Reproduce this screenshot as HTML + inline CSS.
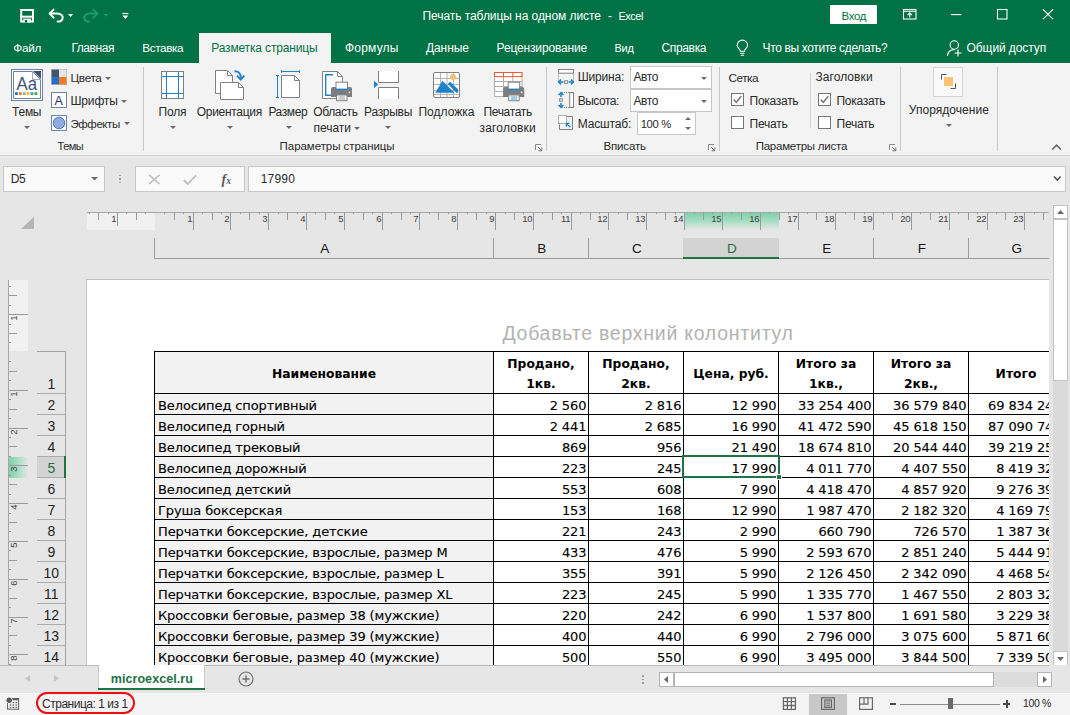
<!DOCTYPE html><html lang="ru"><head><meta charset="utf-8"><title>Печать таблицы на одном листе - Excel</title><style>
*{box-sizing:border-box;margin:0;padding:0}
html,body{width:1070px;height:715px;overflow:hidden;background:#e6e6e6}
body{font-family:"Liberation Sans",sans-serif;font-size:12px;color:#2a2a2a;position:relative}
.a{position:absolute}
.t{position:absolute;white-space:pre;line-height:20px;height:20px}
.d{font-family:"DejaVu Sans","Liberation Sans",sans-serif;-webkit-text-stroke:0.12px currentColor}
.sep{position:absolute;width:1px;background:#c8c8c8}
svg{position:absolute;overflow:visible}
</style></head><body>
<div class="a" style="left:0px;top:0px;width:1070px;height:63px;background:#007245;"></div>
<div class="t" style="left:422.5px;top:5.8px;font-size:12px;letter-spacing:-0.062px;color:#fff;">Печать таблицы на одном листе</div>
<div class="t" style="left:608.0px;top:5.8px;font-size:12px;color:#fff;">-</div>
<div class="t" style="left:618.4px;top:6.2px;font-size:11.0px;letter-spacing:-0.452px;color:#fff;">Excel</div>
<div class="a" style="left:830px;top:5px;width:47px;height:19px;background:#fff;border-radius:1px"></div>
<div class="t" style="left:841.6px;top:6.0px;font-size:11.5px;letter-spacing:-0.405px;color:#007245;">Вход</div>
<div class="t" style="left:13.3px;top:37.9px;font-size:11.75px;letter-spacing:-0.297px;color:#fff;">Файл</div>
<div class="t" style="left:71.4px;top:37.8px;font-size:12px;letter-spacing:-0.431px;color:#fff;">Главная</div>
<div class="t" style="left:142.3px;top:37.9px;font-size:11.75px;letter-spacing:-0.398px;color:#fff;">Вставка</div>
<div class="t" style="left:345.0px;top:37.8px;font-size:12px;letter-spacing:0.197px;color:#fff;">Формулы</div>
<div class="t" style="left:425.9px;top:37.8px;font-size:12px;letter-spacing:-0.052px;color:#fff;">Данные</div>
<div class="t" style="left:496.6px;top:37.8px;font-size:12px;letter-spacing:-0.159px;color:#fff;">Рецензирование</div>
<div class="t" style="left:614.5px;top:38.2px;font-size:11.0px;letter-spacing:-0.303px;color:#fff;">Вид</div>
<div class="t" style="left:661.4px;top:37.8px;font-size:12px;letter-spacing:-0.330px;color:#fff;">Справка</div>
<div class="t" style="left:762.6px;top:37.8px;font-size:12px;letter-spacing:-0.360px;color:#fff;">Что вы хотите сделать?</div>
<div class="t" style="left:966.6px;top:37.8px;font-size:12px;letter-spacing:-0.093px;color:#fff;">Общий доступ</div>
<div class="a" style="left:199px;top:33px;width:132px;height:30px;background:#f3f3f3;"></div>
<div class="t" style="left:211.2px;top:37.8px;font-size:12px;letter-spacing:-0.148px;color:#007245;">Разметка страницы</div>
<div class="a" style="left:0px;top:63px;width:1070px;height:92px;background:#f3f3f3;"></div>
<div class="a" style="left:0px;top:155px;width:1070px;height:1px;background:#d2d2d2;"></div>
<div class="a" style="left:0px;top:156px;width:1070px;height:2px;background:#ececec;"></div>
<div class="sep" style="left:143px;top:67px;height:84px"></div>
<div class="sep" style="left:546px;top:67px;height:84px"></div>
<div class="sep" style="left:719px;top:67px;height:84px"></div>
<div class="sep" style="left:900px;top:67px;height:84px"></div>
<div class="sep" style="left:997px;top:67px;height:84px"></div>
<div class="sep" style="left:810px;top:73px;height:55px;background:#d4d4d4"></div>
<div class="t" style="left:57.6px;top:136.4px;font-size:11px;letter-spacing:-0.568px;">Темы</div>
<div class="t" style="left:279.6px;top:136.2px;font-size:11.5px;letter-spacing:-0.055px;">Параметры страницы</div>
<div class="t" style="left:603.5px;top:136.2px;font-size:11.5px;letter-spacing:-0.164px;">Вписать</div>
<div class="t" style="left:755.7px;top:136.2px;font-size:11.5px;letter-spacing:-0.237px;">Параметры листа</div>
<div class="t" style="left:12.1px;top:102.0px;font-size:12px;letter-spacing:-0.273px;">Темы</div>
<svg style="left:23.8px;top:125.5px" width="6" height="3" viewBox="0 0 6 3"><path d="M0 0H6L3.0 3Z" fill="#6a6a6a"/></svg>
<div class="t" style="left:70.5px;top:67.9px;font-size:11.75px;letter-spacing:-0.334px;">Цвета</div>
<svg style="left:104.5px;top:76.5px" width="6" height="3" viewBox="0 0 6 3"><path d="M0 0H6L3.0 3Z" fill="#6a6a6a"/></svg>
<div class="t" style="left:70.5px;top:90.8px;font-size:12px;letter-spacing:-0.162px;">Шрифты</div>
<svg style="left:120.7px;top:99.5px" width="6" height="3" viewBox="0 0 6 3"><path d="M0 0H6L3.0 3Z" fill="#6a6a6a"/></svg>
<div class="t" style="left:70.5px;top:114.0px;font-size:11.5px;letter-spacing:-0.430px;">Эффекты</div>
<svg style="left:123.5px;top:122.3px" width="6" height="3" viewBox="0 0 6 3"><path d="M0 0H6L3.0 3Z" fill="#6a6a6a"/></svg>
<div class="t" style="left:158.5px;top:102.0px;font-size:12px;letter-spacing:-0.182px;">Поля</div>
<svg style="left:169.5px;top:126px" width="6" height="3" viewBox="0 0 6 3"><path d="M0 0H6L3.0 3Z" fill="#6a6a6a"/></svg>
<div class="t" style="left:196.8px;top:102.0px;font-size:12px;letter-spacing:-0.303px;">Ориентация</div>
<svg style="left:226.5px;top:126px" width="6" height="3" viewBox="0 0 6 3"><path d="M0 0H6L3.0 3Z" fill="#6a6a6a"/></svg>
<div class="t" style="left:268.4px;top:102.0px;font-size:12px;letter-spacing:-0.390px;">Размер</div>
<svg style="left:285.8px;top:126px" width="6" height="3" viewBox="0 0 6 3"><path d="M0 0H6L3.0 3Z" fill="#6a6a6a"/></svg>
<div class="t" style="left:313.3px;top:102.0px;font-size:12px;letter-spacing:-0.416px;">Область</div>
<div class="t" style="left:313.6px;top:117.8px;font-size:12px;letter-spacing:-0.048px;">печати</div>
<svg style="left:353.6px;top:126.5px" width="6" height="3" viewBox="0 0 6 3"><path d="M0 0H6L3.0 3Z" fill="#6a6a6a"/></svg>
<div class="t" style="left:364.1px;top:102.0px;font-size:12px;letter-spacing:-0.292px;">Разрывы</div>
<svg style="left:385.4px;top:126px" width="6" height="3" viewBox="0 0 6 3"><path d="M0 0H6L3.0 3Z" fill="#6a6a6a"/></svg>
<div class="t" style="left:418.5px;top:102.0px;font-size:12px;letter-spacing:-0.005px;">Подложка</div>
<div class="t" style="left:483.4px;top:102.0px;font-size:12px;letter-spacing:-0.313px;">Печатать</div>
<div class="t" style="left:479.6px;top:117.8px;font-size:12px;letter-spacing:0.157px;">заголовки</div>
<div class="t" style="left:577.7px;top:67.4px;font-size:12px;letter-spacing:-0.170px;">Ширина:</div>
<div class="t" style="left:577.7px;top:90.8px;font-size:12px;letter-spacing:-0.474px;">Высота:</div>
<div class="t" style="left:577.7px;top:113.8px;font-size:12px;letter-spacing:-0.141px;">Масштаб:</div>
<div class="a" style="left:630px;top:66px;width:82px;height:23px;background:#fff;border:1px solid #c6c6c6"></div>
<div class="a" style="left:630px;top:89px;width:82px;height:23px;background:#fff;border:1px solid #c6c6c6"></div>
<div class="a" style="left:637px;top:112px;width:59px;height:23px;background:#fff;border:1px solid #c6c6c6"></div>
<div class="t" style="left:633.4px;top:67.4px;font-size:12px;letter-spacing:-0.352px;">Авто</div>
<div class="t" style="left:633.4px;top:90.8px;font-size:12px;letter-spacing:-0.352px;">Авто</div>
<div class="t" style="left:640.7px;top:114.1px;font-size:11.25px;letter-spacing:-0.352px;">100 %</div>
<svg style="left:701.2px;top:76.6px" width="6" height="3" viewBox="0 0 6 3"><path d="M0 0H6L3.0 3Z" fill="#6a6a6a"/></svg>
<svg style="left:701.2px;top:99.6px" width="6" height="3" viewBox="0 0 6 3"><path d="M0 0H6L3.0 3Z" fill="#6a6a6a"/></svg>
<svg style="left:684.6px;top:127px" width="6" height="3" viewBox="0 0 6 3"><path d="M0 0H6L3.0 3Z" fill="#6a6a6a"/></svg>
<svg style="left:684.6px;top:117.3px" width="6" height="3" viewBox="0 0 6 3"><path d="M0 3H6L3 0Z" fill="#6a6a6a"/></svg>
<div class="t" style="left:728.5px;top:67.5px;font-size:11.75px;letter-spacing:-0.463px;">Сетка</div>
<div class="t" style="left:815.4px;top:67.4px;font-size:12px;letter-spacing:0.076px;">Заголовки</div>
<div class="a" style="left:731px;top:93px;width:13px;height:13px;background:#fff;border:1px solid #767676"></div>
<svg style="left:731px;top:93px" width="13" height="13" viewBox="0 0 13 13"><path d="M2.7 6.6L5.3 9.3L10.3 3.2" fill="none" stroke="#7a7a7a" stroke-width="1.5"/></svg>
<div class="a" style="left:731px;top:116px;width:13px;height:13px;background:#fff;border:1px solid #767676"></div>
<div class="t" style="left:749.6px;top:90.8px;font-size:12px;letter-spacing:-0.288px;">Показать</div>
<div class="t" style="left:749.6px;top:113.8px;font-size:12px;letter-spacing:-0.242px;">Печать</div>
<div class="a" style="left:818px;top:93px;width:13px;height:13px;background:#fff;border:1px solid #767676"></div>
<svg style="left:818px;top:93px" width="13" height="13" viewBox="0 0 13 13"><path d="M2.7 6.6L5.3 9.3L10.3 3.2" fill="none" stroke="#7a7a7a" stroke-width="1.5"/></svg>
<div class="a" style="left:818px;top:116px;width:13px;height:13px;background:#fff;border:1px solid #767676"></div>
<div class="t" style="left:836.5px;top:90.8px;font-size:12px;letter-spacing:-0.288px;">Показать</div>
<div class="t" style="left:836.5px;top:113.8px;font-size:12px;letter-spacing:-0.242px;">Печать</div>
<div class="a" style="left:933px;top:67px;width:30px;height:30px;background:#f9f9f9;border:1px solid #d4d4d4"></div>
<div class="t" style="left:908.8px;top:99.6px;font-size:12px;letter-spacing:0.042px;">Упорядочение</div>
<svg style="left:946.3px;top:124.2px" width="6" height="3" viewBox="0 0 6 3"><path d="M0 0H6L3.0 3Z" fill="#6a6a6a"/></svg>
<div class="a" style="left:3px;top:166px;width:102px;height:26px;background:#fafafa;border:1px solid #c8c8c8"></div>
<div class="t" style="left:10.7px;top:169.3px;font-size:12px;letter-spacing:-0.244px;">D5</div>
<svg style="left:91.1px;top:177px" width="7" height="3.5" viewBox="0 0 7 3.5"><path d="M0 0H7L3.5 3.5Z" fill="#6a6a6a"/></svg>
<div class="a" style="left:119.3px;top:174.5px;width:1.7px;height:1.7px;background:#a0a0a0;"></div>
<div class="a" style="left:119.3px;top:178px;width:1.7px;height:1.7px;background:#a0a0a0;"></div>
<div class="a" style="left:119.3px;top:181.5px;width:1.7px;height:1.7px;background:#a0a0a0;"></div>
<div class="a" style="left:135px;top:166px;width:110px;height:26px;background:#fafafa;border:1px solid #c8c8c8"></div>
<div class="a" style="left:248px;top:166px;width:818px;height:26px;background:#fafafa;border:1px solid #c8c8c8"></div>
<div class="t" style="left:260.7px;top:169.3px;font-size:12px;letter-spacing:0.206px;">17990</div>
<div class="a" style="left:86px;top:279px;width:963px;height:387px;background:#fff;border-left:1px solid #c2c2c2;border-top:1px solid #c2c2c2"></div>
<div class="a" style="left:87px;top:212px;width:68px;height:18px;background:#f1f1f1;"></div>
<div class="a" style="left:684px;top:213px;width:95px;height:17px;background:linear-gradient(#7fd1ac,#a9dec6 50%,rgba(230,230,230,0))"></div>
<div class="a" style="left:87px;top:212px;width:962px;height:1px;background:#a6a6a6;"></div>
<div class="a" style="left:89px;top:212px;width:1px;height:2px;background:#9a9a9a;"></div>
<div class="a" style="left:98px;top:212px;width:1px;height:8px;background:#9a9a9a;"></div>
<div class="a" style="left:108px;top:212px;width:1px;height:2px;background:#9a9a9a;"></div>
<div class="a" style="left:117px;top:212px;width:1px;height:14px;background:#9a9a9a;"></div>
<div class="t" style="left:111.2px;top:209.0px;font-size:9.5px;color:#444;">1</div>
<div class="a" style="left:126px;top:212px;width:1px;height:2px;background:#9a9a9a;"></div>
<div class="a" style="left:136px;top:212px;width:1px;height:8px;background:#9a9a9a;"></div>
<div class="a" style="left:145px;top:212px;width:1px;height:2px;background:#9a9a9a;"></div>
<div class="a" style="left:164px;top:212px;width:1px;height:2px;background:#9a9a9a;"></div>
<div class="a" style="left:174px;top:212px;width:1px;height:8px;background:#9a9a9a;"></div>
<div class="a" style="left:183px;top:212px;width:1px;height:2px;background:#9a9a9a;"></div>
<div class="a" style="left:193px;top:212px;width:1px;height:18px;background:#9a9a9a;"></div>
<div class="t" style="left:187.2px;top:209.0px;font-size:9.5px;color:#444;">1</div>
<div class="a" style="left:202px;top:212px;width:1px;height:2px;background:#9a9a9a;"></div>
<div class="a" style="left:212px;top:212px;width:1px;height:8px;background:#9a9a9a;"></div>
<div class="a" style="left:221px;top:212px;width:1px;height:2px;background:#9a9a9a;"></div>
<div class="a" style="left:230px;top:212px;width:1px;height:18px;background:#9a9a9a;"></div>
<div class="t" style="left:224.2px;top:209.0px;font-size:9.5px;color:#444;">2</div>
<div class="a" style="left:240px;top:212px;width:1px;height:2px;background:#9a9a9a;"></div>
<div class="a" style="left:249px;top:212px;width:1px;height:8px;background:#9a9a9a;"></div>
<div class="a" style="left:259px;top:212px;width:1px;height:2px;background:#9a9a9a;"></div>
<div class="a" style="left:268px;top:212px;width:1px;height:18px;background:#9a9a9a;"></div>
<div class="t" style="left:262.2px;top:209.0px;font-size:9.5px;color:#444;">3</div>
<div class="a" style="left:278px;top:212px;width:1px;height:2px;background:#9a9a9a;"></div>
<div class="a" style="left:287px;top:212px;width:1px;height:8px;background:#9a9a9a;"></div>
<div class="a" style="left:297px;top:212px;width:1px;height:2px;background:#9a9a9a;"></div>
<div class="a" style="left:306px;top:212px;width:1px;height:18px;background:#9a9a9a;"></div>
<div class="t" style="left:300.2px;top:209.0px;font-size:9.5px;color:#444;">4</div>
<div class="a" style="left:315px;top:212px;width:1px;height:2px;background:#9a9a9a;"></div>
<div class="a" style="left:325px;top:212px;width:1px;height:8px;background:#9a9a9a;"></div>
<div class="a" style="left:334px;top:212px;width:1px;height:2px;background:#9a9a9a;"></div>
<div class="a" style="left:344px;top:212px;width:1px;height:18px;background:#9a9a9a;"></div>
<div class="t" style="left:338.2px;top:209.0px;font-size:9.5px;color:#444;">5</div>
<div class="a" style="left:353px;top:212px;width:1px;height:2px;background:#9a9a9a;"></div>
<div class="a" style="left:363px;top:212px;width:1px;height:8px;background:#9a9a9a;"></div>
<div class="a" style="left:372px;top:212px;width:1px;height:2px;background:#9a9a9a;"></div>
<div class="a" style="left:382px;top:212px;width:1px;height:18px;background:#9a9a9a;"></div>
<div class="t" style="left:376.2px;top:209.0px;font-size:9.5px;color:#444;">6</div>
<div class="a" style="left:391px;top:212px;width:1px;height:2px;background:#9a9a9a;"></div>
<div class="a" style="left:401px;top:212px;width:1px;height:8px;background:#9a9a9a;"></div>
<div class="a" style="left:410px;top:212px;width:1px;height:2px;background:#9a9a9a;"></div>
<div class="a" style="left:419px;top:212px;width:1px;height:18px;background:#9a9a9a;"></div>
<div class="t" style="left:413.2px;top:209.0px;font-size:9.5px;color:#444;">7</div>
<div class="a" style="left:429px;top:212px;width:1px;height:2px;background:#9a9a9a;"></div>
<div class="a" style="left:438px;top:212px;width:1px;height:8px;background:#9a9a9a;"></div>
<div class="a" style="left:448px;top:212px;width:1px;height:2px;background:#9a9a9a;"></div>
<div class="a" style="left:457px;top:212px;width:1px;height:18px;background:#9a9a9a;"></div>
<div class="t" style="left:451.2px;top:209.0px;font-size:9.5px;color:#444;">8</div>
<div class="a" style="left:467px;top:212px;width:1px;height:2px;background:#9a9a9a;"></div>
<div class="a" style="left:476px;top:212px;width:1px;height:8px;background:#9a9a9a;"></div>
<div class="a" style="left:486px;top:212px;width:1px;height:2px;background:#9a9a9a;"></div>
<div class="a" style="left:495px;top:212px;width:1px;height:18px;background:#9a9a9a;"></div>
<div class="t" style="left:489.2px;top:209.0px;font-size:9.5px;color:#444;">9</div>
<div class="a" style="left:505px;top:212px;width:1px;height:2px;background:#9a9a9a;"></div>
<div class="a" style="left:514px;top:212px;width:1px;height:8px;background:#9a9a9a;"></div>
<div class="a" style="left:523px;top:212px;width:1px;height:2px;background:#9a9a9a;"></div>
<div class="a" style="left:533px;top:212px;width:1px;height:18px;background:#9a9a9a;"></div>
<div class="t" style="left:522.2px;top:209.0px;font-size:9.5px;letter-spacing:-0.300px;color:#444;">10</div>
<div class="a" style="left:542px;top:212px;width:1px;height:2px;background:#9a9a9a;"></div>
<div class="a" style="left:552px;top:212px;width:1px;height:8px;background:#9a9a9a;"></div>
<div class="a" style="left:561px;top:212px;width:1px;height:2px;background:#9a9a9a;"></div>
<div class="a" style="left:571px;top:212px;width:1px;height:18px;background:#9a9a9a;"></div>
<div class="t" style="left:560.9px;top:209.0px;font-size:9.5px;letter-spacing:-0.300px;color:#444;">11</div>
<div class="a" style="left:580px;top:212px;width:1px;height:2px;background:#9a9a9a;"></div>
<div class="a" style="left:590px;top:212px;width:1px;height:8px;background:#9a9a9a;"></div>
<div class="a" style="left:599px;top:212px;width:1px;height:2px;background:#9a9a9a;"></div>
<div class="a" style="left:608px;top:212px;width:1px;height:18px;background:#9a9a9a;"></div>
<div class="t" style="left:597.2px;top:209.0px;font-size:9.5px;letter-spacing:-0.300px;color:#444;">12</div>
<div class="a" style="left:618px;top:212px;width:1px;height:2px;background:#9a9a9a;"></div>
<div class="a" style="left:627px;top:212px;width:1px;height:8px;background:#9a9a9a;"></div>
<div class="a" style="left:637px;top:212px;width:1px;height:2px;background:#9a9a9a;"></div>
<div class="a" style="left:646px;top:212px;width:1px;height:18px;background:#9a9a9a;"></div>
<div class="t" style="left:635.2px;top:209.0px;font-size:9.5px;letter-spacing:-0.300px;color:#444;">13</div>
<div class="a" style="left:656px;top:212px;width:1px;height:2px;background:#9a9a9a;"></div>
<div class="a" style="left:665px;top:212px;width:1px;height:8px;background:#9a9a9a;"></div>
<div class="a" style="left:675px;top:212px;width:1px;height:2px;background:#9a9a9a;"></div>
<div class="a" style="left:684px;top:212px;width:1px;height:18px;background:#9a9a9a;"></div>
<div class="t" style="left:673.2px;top:209.0px;font-size:9.5px;letter-spacing:-0.300px;color:#444;">14</div>
<div class="a" style="left:694px;top:212px;width:1px;height:2px;background:#9a9a9a;"></div>
<div class="a" style="left:703px;top:212px;width:1px;height:8px;background:#9a9a9a;"></div>
<div class="a" style="left:712px;top:212px;width:1px;height:2px;background:#9a9a9a;"></div>
<div class="a" style="left:722px;top:212px;width:1px;height:18px;background:#9a9a9a;"></div>
<div class="t" style="left:711.2px;top:209.0px;font-size:9.5px;letter-spacing:-0.300px;color:#444;">15</div>
<div class="a" style="left:731px;top:212px;width:1px;height:2px;background:#9a9a9a;"></div>
<div class="a" style="left:741px;top:212px;width:1px;height:8px;background:#9a9a9a;"></div>
<div class="a" style="left:750px;top:212px;width:1px;height:2px;background:#9a9a9a;"></div>
<div class="a" style="left:760px;top:212px;width:1px;height:18px;background:#9a9a9a;"></div>
<div class="t" style="left:749.2px;top:209.0px;font-size:9.5px;letter-spacing:-0.300px;color:#444;">16</div>
<div class="a" style="left:769px;top:212px;width:1px;height:2px;background:#9a9a9a;"></div>
<div class="a" style="left:779px;top:212px;width:1px;height:8px;background:#9a9a9a;"></div>
<div class="a" style="left:788px;top:212px;width:1px;height:2px;background:#9a9a9a;"></div>
<div class="a" style="left:798px;top:212px;width:1px;height:18px;background:#9a9a9a;"></div>
<div class="t" style="left:787.2px;top:209.0px;font-size:9.5px;letter-spacing:-0.300px;color:#444;">17</div>
<div class="a" style="left:807px;top:212px;width:1px;height:2px;background:#9a9a9a;"></div>
<div class="a" style="left:816px;top:212px;width:1px;height:8px;background:#9a9a9a;"></div>
<div class="a" style="left:826px;top:212px;width:1px;height:2px;background:#9a9a9a;"></div>
<div class="a" style="left:835px;top:212px;width:1px;height:18px;background:#9a9a9a;"></div>
<div class="t" style="left:824.2px;top:209.0px;font-size:9.5px;letter-spacing:-0.300px;color:#444;">18</div>
<div class="a" style="left:845px;top:212px;width:1px;height:2px;background:#9a9a9a;"></div>
<div class="a" style="left:854px;top:212px;width:1px;height:8px;background:#9a9a9a;"></div>
<div class="a" style="left:864px;top:212px;width:1px;height:2px;background:#9a9a9a;"></div>
<div class="a" style="left:873px;top:212px;width:1px;height:18px;background:#9a9a9a;"></div>
<div class="t" style="left:862.2px;top:209.0px;font-size:9.5px;letter-spacing:-0.300px;color:#444;">19</div>
<div class="a" style="left:883px;top:212px;width:1px;height:2px;background:#9a9a9a;"></div>
<div class="a" style="left:892px;top:212px;width:1px;height:8px;background:#9a9a9a;"></div>
<div class="a" style="left:902px;top:212px;width:1px;height:2px;background:#9a9a9a;"></div>
<div class="a" style="left:911px;top:212px;width:1px;height:18px;background:#9a9a9a;"></div>
<div class="t" style="left:900.2px;top:209.0px;font-size:9.5px;letter-spacing:-0.300px;color:#444;">20</div>
<div class="a" style="left:920px;top:212px;width:1px;height:2px;background:#9a9a9a;"></div>
<div class="a" style="left:930px;top:212px;width:1px;height:8px;background:#9a9a9a;"></div>
<div class="a" style="left:939px;top:212px;width:1px;height:2px;background:#9a9a9a;"></div>
<div class="a" style="left:949px;top:212px;width:1px;height:18px;background:#9a9a9a;"></div>
<div class="t" style="left:938.2px;top:209.0px;font-size:9.5px;letter-spacing:-0.300px;color:#444;">21</div>
<div class="a" style="left:958px;top:212px;width:1px;height:2px;background:#9a9a9a;"></div>
<div class="a" style="left:968px;top:212px;width:1px;height:8px;background:#9a9a9a;"></div>
<div class="a" style="left:977px;top:212px;width:1px;height:2px;background:#9a9a9a;"></div>
<div class="a" style="left:987px;top:212px;width:1px;height:18px;background:#9a9a9a;"></div>
<div class="t" style="left:976.2px;top:209.0px;font-size:9.5px;letter-spacing:-0.300px;color:#444;">22</div>
<div class="a" style="left:996px;top:212px;width:1px;height:2px;background:#9a9a9a;"></div>
<div class="a" style="left:1005px;top:212px;width:1px;height:8px;background:#9a9a9a;"></div>
<div class="a" style="left:1015px;top:212px;width:1px;height:2px;background:#9a9a9a;"></div>
<div class="a" style="left:1024px;top:212px;width:1px;height:18px;background:#9a9a9a;"></div>
<div class="t" style="left:1013.2px;top:209.0px;font-size:9.5px;letter-spacing:-0.300px;color:#444;">23</div>
<div class="a" style="left:1034px;top:212px;width:1px;height:2px;background:#9a9a9a;"></div>
<div class="a" style="left:1043px;top:212px;width:1px;height:8px;background:#9a9a9a;"></div>
<div class="a" style="left:154px;top:258px;width:895px;height:1px;background:#9c9c9c;"></div>
<div class="a" style="left:154px;top:238px;width:1px;height:21px;background:#9c9c9c;"></div>
<div class="a" style="left:493px;top:238px;width:1px;height:21px;background:#9c9c9c;"></div>
<div class="a" style="left:588px;top:238px;width:1px;height:21px;background:#9c9c9c;"></div>
<div class="a" style="left:683px;top:238px;width:1px;height:21px;background:#9c9c9c;"></div>
<div class="a" style="left:778px;top:238px;width:1px;height:21px;background:#9c9c9c;"></div>
<div class="a" style="left:873px;top:238px;width:1px;height:21px;background:#9c9c9c;"></div>
<div class="a" style="left:968px;top:238px;width:1px;height:21px;background:#9c9c9c;"></div>
<div class="a" style="left:683px;top:238px;width:96px;height:19px;background:#d3d3d3;"></div>
<div class="a" style="left:683px;top:257px;width:96px;height:2px;background:#217346;"></div>
<div class="t" style="left:320.3px;top:239.0px;font-size:13.5px;color:#161616;">A</div>
<div class="t" style="left:537.3px;top:239.0px;font-size:13.5px;color:#161616;">B</div>
<div class="t" style="left:631.9px;top:239.0px;font-size:13.5px;color:#161616;">C</div>
<div class="t" style="left:726.9px;top:239.0px;font-size:13.5px;color:#217346;">D</div>
<div class="t" style="left:822.3px;top:239.0px;font-size:13.5px;color:#161616;">E</div>
<div class="t" style="left:917.7px;top:239.0px;font-size:13.5px;color:#161616;">F</div>
<div class="t" style="left:1011.5px;top:239.0px;font-size:13.5px;color:#161616;">G</div>
<div class="a" style="left:87px;top:280px;width:962px;height:386px;overflow:hidden">
<div class="a" style="left:67px;top:71px;width:339px;height:320px;background:#f2f2f2;"></div>
<div class="t" style="left:415.4px;top:42.5px;font-size:19.5px;letter-spacing:0.746px;color:#b2b2b2;">Добавьте верхний колонтитул</div>
<div class="a" style="left:67px;top:71px;width:920px;height:1px;background:#000;"></div>
<div class="a" style="left:67px;top:113px;width:920px;height:1px;background:#000;"></div>
<div class="a" style="left:67px;top:134px;width:920px;height:1px;background:#000;"></div>
<div class="a" style="left:67px;top:155px;width:920px;height:1px;background:#000;"></div>
<div class="a" style="left:67px;top:176px;width:920px;height:1px;background:#000;"></div>
<div class="a" style="left:67px;top:197px;width:920px;height:1px;background:#000;"></div>
<div class="a" style="left:67px;top:218px;width:920px;height:1px;background:#000;"></div>
<div class="a" style="left:67px;top:239px;width:920px;height:1px;background:#000;"></div>
<div class="a" style="left:67px;top:260px;width:920px;height:1px;background:#000;"></div>
<div class="a" style="left:67px;top:281px;width:920px;height:1px;background:#000;"></div>
<div class="a" style="left:67px;top:302px;width:920px;height:1px;background:#000;"></div>
<div class="a" style="left:67px;top:323px;width:920px;height:1px;background:#000;"></div>
<div class="a" style="left:67px;top:344px;width:920px;height:1px;background:#000;"></div>
<div class="a" style="left:67px;top:365px;width:920px;height:1px;background:#000;"></div>
<div class="a" style="left:67px;top:386px;width:920px;height:1px;background:#000;"></div>
<div class="a" style="left:67px;top:71px;width:1px;height:320px;background:#000;"></div>
<div class="a" style="left:406px;top:71px;width:1px;height:320px;background:#000;"></div>
<div class="a" style="left:501px;top:71px;width:1px;height:320px;background:#000;"></div>
<div class="a" style="left:596px;top:71px;width:1px;height:320px;background:#000;"></div>
<div class="a" style="left:691px;top:71px;width:1px;height:320px;background:#000;"></div>
<div class="a" style="left:786px;top:71px;width:1px;height:320px;background:#000;"></div>
<div class="a" style="left:881px;top:71px;width:1px;height:320px;background:#000;"></div>
<div class="t d" style="left:185.0px;top:83.7px;font-size:12.3px;font-weight:bold;-webkit-text-stroke:0;color:#000;">Наименование</div>
<div class="t d" style="left:420.3px;top:73.8px;font-size:12.3px;font-weight:bold;-webkit-text-stroke:0;color:#000;">Продано,</div>
<div class="t d" style="left:439.3px;top:94.0px;font-size:12.3px;font-weight:bold;-webkit-text-stroke:0;color:#000;">1кв.</div>
<div class="t d" style="left:515.3px;top:73.8px;font-size:12.3px;font-weight:bold;-webkit-text-stroke:0;color:#000;">Продано,</div>
<div class="t d" style="left:534.3px;top:94.0px;font-size:12.3px;font-weight:bold;-webkit-text-stroke:0;color:#000;">2кв.</div>
<div class="t d" style="left:606.2px;top:83.7px;font-size:12.3px;font-weight:bold;-webkit-text-stroke:0;color:#000;">Цена, руб.</div>
<div class="t d" style="left:708.8px;top:73.8px;font-size:12.3px;font-weight:bold;-webkit-text-stroke:0;color:#000;">Итого за</div>
<div class="t d" style="left:722.0px;top:94.0px;font-size:12.3px;font-weight:bold;-webkit-text-stroke:0;color:#000;">1кв.,</div>
<div class="t d" style="left:803.8px;top:73.8px;font-size:12.3px;font-weight:bold;-webkit-text-stroke:0;color:#000;">Итого за</div>
<div class="t d" style="left:817.0px;top:94.0px;font-size:12.3px;font-weight:bold;-webkit-text-stroke:0;color:#000;">2кв.,</div>
<div class="t d" style="left:908.6px;top:83.7px;font-size:12.3px;font-weight:bold;-webkit-text-stroke:0;color:#000;">Итого</div>
<div class="t d" style="left:71.0px;top:116.1px;font-size:13px;color:#000;letter-spacing:-0.11px;">Велосипед спортивный</div>
<div class="t d" style="left:462.7px;top:116.1px;font-size:13px;letter-spacing:-0.110px;color:#000;">2 560</div>
<div class="t d" style="left:557.7px;top:116.1px;font-size:13px;letter-spacing:-0.110px;color:#000;">2 816</div>
<div class="t d" style="left:644.5px;top:116.1px;font-size:13px;letter-spacing:-0.110px;color:#000;">12 990</div>
<div class="t d" style="left:711.1px;top:116.1px;font-size:13px;letter-spacing:-0.110px;color:#000;">33 254 400</div>
<div class="t d" style="left:806.1px;top:116.1px;font-size:13px;letter-spacing:-0.110px;color:#000;">36 579 840</div>
<div class="t d" style="left:901.1px;top:116.1px;font-size:13px;letter-spacing:-0.110px;color:#000;">69 834 240</div>
<div class="t d" style="left:71.0px;top:137.1px;font-size:13px;color:#000;letter-spacing:-0.11px;">Велосипед горный</div>
<div class="t d" style="left:462.7px;top:137.1px;font-size:13px;letter-spacing:-0.110px;color:#000;">2 441</div>
<div class="t d" style="left:557.7px;top:137.1px;font-size:13px;letter-spacing:-0.110px;color:#000;">2 685</div>
<div class="t d" style="left:644.5px;top:137.1px;font-size:13px;letter-spacing:-0.110px;color:#000;">16 990</div>
<div class="t d" style="left:711.1px;top:137.1px;font-size:13px;letter-spacing:-0.110px;color:#000;">41 472 590</div>
<div class="t d" style="left:806.1px;top:137.1px;font-size:13px;letter-spacing:-0.110px;color:#000;">45 618 150</div>
<div class="t d" style="left:901.1px;top:137.1px;font-size:13px;letter-spacing:-0.110px;color:#000;">87 090 740</div>
<div class="t d" style="left:71.0px;top:158.1px;font-size:13px;color:#000;letter-spacing:-0.11px;">Велосипед трековый</div>
<div class="t d" style="left:474.9px;top:158.1px;font-size:13px;letter-spacing:-0.110px;color:#000;">869</div>
<div class="t d" style="left:569.9px;top:158.1px;font-size:13px;letter-spacing:-0.110px;color:#000;">956</div>
<div class="t d" style="left:644.5px;top:158.1px;font-size:13px;letter-spacing:-0.110px;color:#000;">21 490</div>
<div class="t d" style="left:711.1px;top:158.1px;font-size:13px;letter-spacing:-0.110px;color:#000;">18 674 810</div>
<div class="t d" style="left:806.1px;top:158.1px;font-size:13px;letter-spacing:-0.110px;color:#000;">20 544 440</div>
<div class="t d" style="left:901.1px;top:158.1px;font-size:13px;letter-spacing:-0.110px;color:#000;">39 219 250</div>
<div class="t d" style="left:71.0px;top:179.1px;font-size:13px;color:#000;letter-spacing:-0.11px;">Велосипед дорожный</div>
<div class="t d" style="left:474.9px;top:179.1px;font-size:13px;letter-spacing:-0.110px;color:#000;">223</div>
<div class="t d" style="left:569.9px;top:179.1px;font-size:13px;letter-spacing:-0.110px;color:#000;">245</div>
<div class="t d" style="left:644.5px;top:179.1px;font-size:13px;letter-spacing:-0.110px;color:#000;">17 990</div>
<div class="t d" style="left:719.2px;top:179.1px;font-size:13px;letter-spacing:-0.110px;color:#000;">4 011 770</div>
<div class="t d" style="left:814.2px;top:179.1px;font-size:13px;letter-spacing:-0.110px;color:#000;">4 407 550</div>
<div class="t d" style="left:909.2px;top:179.1px;font-size:13px;letter-spacing:-0.110px;color:#000;">8 419 320</div>
<div class="t d" style="left:71.0px;top:200.1px;font-size:13px;color:#000;letter-spacing:-0.11px;">Велосипед детский</div>
<div class="t d" style="left:474.9px;top:200.1px;font-size:13px;letter-spacing:-0.110px;color:#000;">553</div>
<div class="t d" style="left:569.9px;top:200.1px;font-size:13px;letter-spacing:-0.110px;color:#000;">608</div>
<div class="t d" style="left:652.7px;top:200.1px;font-size:13px;letter-spacing:-0.110px;color:#000;">7 990</div>
<div class="t d" style="left:719.2px;top:200.1px;font-size:13px;letter-spacing:-0.110px;color:#000;">4 418 470</div>
<div class="t d" style="left:814.2px;top:200.1px;font-size:13px;letter-spacing:-0.110px;color:#000;">4 857 920</div>
<div class="t d" style="left:909.2px;top:200.1px;font-size:13px;letter-spacing:-0.110px;color:#000;">9 276 390</div>
<div class="t d" style="left:71.0px;top:221.1px;font-size:13px;color:#000;letter-spacing:-0.11px;">Груша боксерская</div>
<div class="t d" style="left:474.9px;top:221.1px;font-size:13px;letter-spacing:-0.110px;color:#000;">153</div>
<div class="t d" style="left:569.9px;top:221.1px;font-size:13px;letter-spacing:-0.110px;color:#000;">168</div>
<div class="t d" style="left:644.5px;top:221.1px;font-size:13px;letter-spacing:-0.110px;color:#000;">12 990</div>
<div class="t d" style="left:719.2px;top:221.1px;font-size:13px;letter-spacing:-0.110px;color:#000;">1 987 470</div>
<div class="t d" style="left:814.2px;top:221.1px;font-size:13px;letter-spacing:-0.110px;color:#000;">2 182 320</div>
<div class="t d" style="left:909.2px;top:221.1px;font-size:13px;letter-spacing:-0.110px;color:#000;">4 169 790</div>
<div class="t d" style="left:71.0px;top:242.1px;font-size:13px;color:#000;letter-spacing:-0.11px;">Перчатки боксерские, детские</div>
<div class="t d" style="left:474.9px;top:242.1px;font-size:13px;letter-spacing:-0.110px;color:#000;">221</div>
<div class="t d" style="left:569.9px;top:242.1px;font-size:13px;letter-spacing:-0.110px;color:#000;">243</div>
<div class="t d" style="left:652.7px;top:242.1px;font-size:13px;letter-spacing:-0.110px;color:#000;">2 990</div>
<div class="t d" style="left:731.4px;top:242.1px;font-size:13px;letter-spacing:-0.110px;color:#000;">660 790</div>
<div class="t d" style="left:826.4px;top:242.1px;font-size:13px;letter-spacing:-0.110px;color:#000;">726 570</div>
<div class="t d" style="left:909.2px;top:242.1px;font-size:13px;letter-spacing:-0.110px;color:#000;">1 387 360</div>
<div class="t d" style="left:71.0px;top:263.1px;font-size:13px;color:#000;letter-spacing:-0.11px;">Перчатки боксерские, взрослые, размер M</div>
<div class="t d" style="left:474.9px;top:263.1px;font-size:13px;letter-spacing:-0.110px;color:#000;">433</div>
<div class="t d" style="left:569.9px;top:263.1px;font-size:13px;letter-spacing:-0.110px;color:#000;">476</div>
<div class="t d" style="left:652.7px;top:263.1px;font-size:13px;letter-spacing:-0.110px;color:#000;">5 990</div>
<div class="t d" style="left:719.2px;top:263.1px;font-size:13px;letter-spacing:-0.110px;color:#000;">2 593 670</div>
<div class="t d" style="left:814.2px;top:263.1px;font-size:13px;letter-spacing:-0.110px;color:#000;">2 851 240</div>
<div class="t d" style="left:909.2px;top:263.1px;font-size:13px;letter-spacing:-0.110px;color:#000;">5 444 910</div>
<div class="t d" style="left:71.0px;top:284.1px;font-size:13px;color:#000;letter-spacing:-0.11px;">Перчатки боксерские, взрослые, размер L</div>
<div class="t d" style="left:474.9px;top:284.1px;font-size:13px;letter-spacing:-0.110px;color:#000;">355</div>
<div class="t d" style="left:569.9px;top:284.1px;font-size:13px;letter-spacing:-0.110px;color:#000;">391</div>
<div class="t d" style="left:652.7px;top:284.1px;font-size:13px;letter-spacing:-0.110px;color:#000;">5 990</div>
<div class="t d" style="left:719.2px;top:284.1px;font-size:13px;letter-spacing:-0.110px;color:#000;">2 126 450</div>
<div class="t d" style="left:814.2px;top:284.1px;font-size:13px;letter-spacing:-0.110px;color:#000;">2 342 090</div>
<div class="t d" style="left:909.2px;top:284.1px;font-size:13px;letter-spacing:-0.110px;color:#000;">4 468 540</div>
<div class="t d" style="left:71.0px;top:305.1px;font-size:13px;color:#000;letter-spacing:-0.11px;">Перчатки боксерские, взрослые, размер XL</div>
<div class="t d" style="left:474.9px;top:305.1px;font-size:13px;letter-spacing:-0.110px;color:#000;">223</div>
<div class="t d" style="left:569.9px;top:305.1px;font-size:13px;letter-spacing:-0.110px;color:#000;">245</div>
<div class="t d" style="left:652.7px;top:305.1px;font-size:13px;letter-spacing:-0.110px;color:#000;">5 990</div>
<div class="t d" style="left:719.2px;top:305.1px;font-size:13px;letter-spacing:-0.110px;color:#000;">1 335 770</div>
<div class="t d" style="left:814.2px;top:305.1px;font-size:13px;letter-spacing:-0.110px;color:#000;">1 467 550</div>
<div class="t d" style="left:909.2px;top:305.1px;font-size:13px;letter-spacing:-0.110px;color:#000;">2 803 320</div>
<div class="t d" style="left:71.0px;top:326.1px;font-size:13px;color:#000;letter-spacing:-0.11px;">Кроссовки беговые, размер 38 (мужские)</div>
<div class="t d" style="left:474.9px;top:326.1px;font-size:13px;letter-spacing:-0.110px;color:#000;">220</div>
<div class="t d" style="left:569.9px;top:326.1px;font-size:13px;letter-spacing:-0.110px;color:#000;">242</div>
<div class="t d" style="left:652.7px;top:326.1px;font-size:13px;letter-spacing:-0.110px;color:#000;">6 990</div>
<div class="t d" style="left:719.2px;top:326.1px;font-size:13px;letter-spacing:-0.110px;color:#000;">1 537 800</div>
<div class="t d" style="left:814.2px;top:326.1px;font-size:13px;letter-spacing:-0.110px;color:#000;">1 691 580</div>
<div class="t d" style="left:909.2px;top:326.1px;font-size:13px;letter-spacing:-0.110px;color:#000;">3 229 380</div>
<div class="t d" style="left:71.0px;top:347.1px;font-size:13px;color:#000;letter-spacing:-0.11px;">Кроссовки беговые, размер 39 (мужские)</div>
<div class="t d" style="left:474.9px;top:347.1px;font-size:13px;letter-spacing:-0.110px;color:#000;">400</div>
<div class="t d" style="left:569.9px;top:347.1px;font-size:13px;letter-spacing:-0.110px;color:#000;">440</div>
<div class="t d" style="left:652.7px;top:347.1px;font-size:13px;letter-spacing:-0.110px;color:#000;">6 990</div>
<div class="t d" style="left:719.2px;top:347.1px;font-size:13px;letter-spacing:-0.110px;color:#000;">2 796 000</div>
<div class="t d" style="left:814.2px;top:347.1px;font-size:13px;letter-spacing:-0.110px;color:#000;">3 075 600</div>
<div class="t d" style="left:909.2px;top:347.1px;font-size:13px;letter-spacing:-0.110px;color:#000;">5 871 600</div>
<div class="t d" style="left:71.0px;top:368.1px;font-size:13px;color:#000;letter-spacing:-0.11px;">Кроссовки беговые, размер 40 (мужские)</div>
<div class="t d" style="left:474.9px;top:368.1px;font-size:13px;letter-spacing:-0.110px;color:#000;">500</div>
<div class="t d" style="left:569.9px;top:368.1px;font-size:13px;letter-spacing:-0.110px;color:#000;">550</div>
<div class="t d" style="left:652.7px;top:368.1px;font-size:13px;letter-spacing:-0.110px;color:#000;">6 990</div>
<div class="t d" style="left:719.2px;top:368.1px;font-size:13px;letter-spacing:-0.110px;color:#000;">3 495 000</div>
<div class="t d" style="left:814.2px;top:368.1px;font-size:13px;letter-spacing:-0.110px;color:#000;">3 844 500</div>
<div class="t d" style="left:909.2px;top:368.1px;font-size:13px;letter-spacing:-0.110px;color:#000;">7 339 500</div>
<div class="a" style="left:595px;top:175px;width:98px;height:23px;background:transparent;border:2px solid #217346"></div>
<div class="a" style="left:689px;top:194px;width:6px;height:6px;background:#217346;border:1px solid #fff"></div>
</div>
<div class="a" style="left:37px;top:351px;width:30px;height:315px;background:#e6e6e6;"></div>
<div class="a" style="left:37px;top:457px;width:28px;height:21px;background:#d3d3d3;"></div>
<div class="a" style="left:37px;top:351px;width:29px;height:1px;background:#a2a2a2;"></div>
<div class="a" style="left:65px;top:351px;width:1px;height:315px;background:#a2a2a2;"></div>
<div class="a" style="left:37px;top:393px;width:29px;height:1px;background:#ababab;"></div>
<div class="a" style="left:37px;top:414px;width:29px;height:1px;background:#ababab;"></div>
<div class="a" style="left:37px;top:435px;width:29px;height:1px;background:#ababab;"></div>
<div class="a" style="left:37px;top:456px;width:29px;height:1px;background:#ababab;"></div>
<div class="a" style="left:37px;top:477px;width:29px;height:1px;background:#ababab;"></div>
<div class="a" style="left:37px;top:498px;width:29px;height:1px;background:#ababab;"></div>
<div class="a" style="left:37px;top:519px;width:29px;height:1px;background:#ababab;"></div>
<div class="a" style="left:37px;top:540px;width:29px;height:1px;background:#ababab;"></div>
<div class="a" style="left:37px;top:561px;width:29px;height:1px;background:#ababab;"></div>
<div class="a" style="left:37px;top:582px;width:29px;height:1px;background:#ababab;"></div>
<div class="a" style="left:37px;top:603px;width:29px;height:1px;background:#ababab;"></div>
<div class="a" style="left:37px;top:624px;width:29px;height:1px;background:#ababab;"></div>
<div class="a" style="left:37px;top:645px;width:29px;height:1px;background:#ababab;"></div>
<div class="a" style="left:64px;top:456px;width:2px;height:22px;background:#217346;"></div>
<div class="t" style="left:47.4px;top:374.4px;font-size:14px;color:#1f1f1f;">1</div>
<div class="t" style="left:47.4px;top:395.4px;font-size:14px;color:#1f1f1f;">2</div>
<div class="t" style="left:47.4px;top:416.4px;font-size:14px;color:#1f1f1f;">3</div>
<div class="t" style="left:47.4px;top:437.4px;font-size:14px;color:#1f1f1f;">4</div>
<div class="t" style="left:47.4px;top:458.4px;font-size:14px;color:#217346;">5</div>
<div class="t" style="left:47.4px;top:479.4px;font-size:14px;color:#1f1f1f;">6</div>
<div class="t" style="left:47.4px;top:500.4px;font-size:14px;color:#1f1f1f;">7</div>
<div class="t" style="left:47.4px;top:521.4px;font-size:14px;color:#1f1f1f;">8</div>
<div class="t" style="left:47.4px;top:542.4px;font-size:14px;color:#1f1f1f;">9</div>
<div class="t" style="left:43.5px;top:563.4px;font-size:14px;color:#1f1f1f;">10</div>
<div class="t" style="left:44.0px;top:584.4px;font-size:14px;color:#1f1f1f;">11</div>
<div class="t" style="left:43.5px;top:605.4px;font-size:14px;color:#1f1f1f;">12</div>
<div class="t" style="left:43.5px;top:626.4px;font-size:14px;color:#1f1f1f;">13</div>
<div class="t" style="left:43.5px;top:647.4px;font-size:14px;color:#1f1f1f;">14</div>
<div class="a" style="left:9px;top:280px;width:19px;height:71px;background:#f1f1f1;"></div>
<div class="a" style="left:9px;top:457px;width:19px;height:21px;background:linear-gradient(90deg,#7fd1ac,#a9dec6 50%,rgba(230,230,230,0))"></div>
<div class="a" style="left:8px;top:280px;width:1px;height:386px;background:#a6a6a6;"></div>
<div class="a" style="left:9px;top:286px;width:2px;height:1px;background:#9a9a9a;"></div>
<div class="a" style="left:9px;top:295px;width:8px;height:1px;background:#9a9a9a;"></div>
<div class="a" style="left:9px;top:305px;width:2px;height:1px;background:#9a9a9a;"></div>
<div class="a" style="left:9px;top:314px;width:19px;height:1px;background:#9a9a9a;"></div>
<div class="t" style="left:4px;top:308px;width:20px;height:20px;line-height:20px;text-align:center;font-size:9.5px;color:#444;transform:rotate(-90deg)">1</div>
<div class="a" style="left:9px;top:324px;width:2px;height:1px;background:#9a9a9a;"></div>
<div class="a" style="left:9px;top:333px;width:8px;height:1px;background:#9a9a9a;"></div>
<div class="a" style="left:9px;top:342px;width:2px;height:1px;background:#9a9a9a;"></div>
<div class="a" style="left:9px;top:361px;width:2px;height:1px;background:#9a9a9a;"></div>
<div class="a" style="left:9px;top:371px;width:8px;height:1px;background:#9a9a9a;"></div>
<div class="a" style="left:9px;top:380px;width:2px;height:1px;background:#9a9a9a;"></div>
<div class="a" style="left:9px;top:390px;width:19px;height:1px;background:#9a9a9a;"></div>
<div class="t" style="left:4px;top:384px;width:20px;height:20px;line-height:20px;text-align:center;font-size:9.5px;color:#444;transform:rotate(-90deg)">1</div>
<div class="a" style="left:9px;top:399px;width:2px;height:1px;background:#9a9a9a;"></div>
<div class="a" style="left:9px;top:409px;width:8px;height:1px;background:#9a9a9a;"></div>
<div class="a" style="left:9px;top:418px;width:2px;height:1px;background:#9a9a9a;"></div>
<div class="a" style="left:9px;top:428px;width:19px;height:1px;background:#9a9a9a;"></div>
<div class="t" style="left:4px;top:422px;width:20px;height:20px;line-height:20px;text-align:center;font-size:9.5px;color:#444;transform:rotate(-90deg)">2</div>
<div class="a" style="left:9px;top:437px;width:2px;height:1px;background:#9a9a9a;"></div>
<div class="a" style="left:9px;top:446px;width:8px;height:1px;background:#9a9a9a;"></div>
<div class="a" style="left:9px;top:456px;width:2px;height:1px;background:#9a9a9a;"></div>
<div class="a" style="left:9px;top:465px;width:19px;height:1px;background:#9a9a9a;"></div>
<div class="t" style="left:4px;top:459px;width:20px;height:20px;line-height:20px;text-align:center;font-size:9.5px;color:#444;transform:rotate(-90deg)">3</div>
<div class="a" style="left:9px;top:475px;width:2px;height:1px;background:#9a9a9a;"></div>
<div class="a" style="left:9px;top:484px;width:8px;height:1px;background:#9a9a9a;"></div>
<div class="a" style="left:9px;top:494px;width:2px;height:1px;background:#9a9a9a;"></div>
<div class="a" style="left:9px;top:503px;width:19px;height:1px;background:#9a9a9a;"></div>
<div class="t" style="left:4px;top:497px;width:20px;height:20px;line-height:20px;text-align:center;font-size:9.5px;color:#444;transform:rotate(-90deg)">4</div>
<div class="a" style="left:9px;top:513px;width:2px;height:1px;background:#9a9a9a;"></div>
<div class="a" style="left:9px;top:522px;width:8px;height:1px;background:#9a9a9a;"></div>
<div class="a" style="left:9px;top:531px;width:2px;height:1px;background:#9a9a9a;"></div>
<div class="a" style="left:9px;top:541px;width:19px;height:1px;background:#9a9a9a;"></div>
<div class="t" style="left:4px;top:535px;width:20px;height:20px;line-height:20px;text-align:center;font-size:9.5px;color:#444;transform:rotate(-90deg)">5</div>
<div class="a" style="left:9px;top:550px;width:2px;height:1px;background:#9a9a9a;"></div>
<div class="a" style="left:9px;top:560px;width:8px;height:1px;background:#9a9a9a;"></div>
<div class="a" style="left:9px;top:569px;width:2px;height:1px;background:#9a9a9a;"></div>
<div class="a" style="left:9px;top:579px;width:19px;height:1px;background:#9a9a9a;"></div>
<div class="t" style="left:4px;top:573px;width:20px;height:20px;line-height:20px;text-align:center;font-size:9.5px;color:#444;transform:rotate(-90deg)">6</div>
<div class="a" style="left:9px;top:588px;width:2px;height:1px;background:#9a9a9a;"></div>
<div class="a" style="left:9px;top:598px;width:8px;height:1px;background:#9a9a9a;"></div>
<div class="a" style="left:9px;top:607px;width:2px;height:1px;background:#9a9a9a;"></div>
<div class="a" style="left:9px;top:617px;width:19px;height:1px;background:#9a9a9a;"></div>
<div class="t" style="left:4px;top:611px;width:20px;height:20px;line-height:20px;text-align:center;font-size:9.5px;color:#444;transform:rotate(-90deg)">7</div>
<div class="a" style="left:9px;top:626px;width:2px;height:1px;background:#9a9a9a;"></div>
<div class="a" style="left:9px;top:635px;width:8px;height:1px;background:#9a9a9a;"></div>
<div class="a" style="left:9px;top:645px;width:2px;height:1px;background:#9a9a9a;"></div>
<div class="a" style="left:9px;top:654px;width:19px;height:1px;background:#9a9a9a;"></div>
<div class="t" style="left:4px;top:648px;width:20px;height:20px;line-height:20px;text-align:center;font-size:9.5px;color:#444;transform:rotate(-90deg)">8</div>
<div class="a" style="left:9px;top:664px;width:2px;height:1px;background:#9a9a9a;"></div>
<svg style="left:21px;top:217px" width="13" height="12" viewBox="0 0 13 12"><path d="M13 0V12H0Z" fill="#b4b4b4"/></svg>
<div class="a" style="left:1053px;top:205px;width:15px;height:14px;background:#fff;border:1px solid #c2c2c2"></div>
<svg style="left:1057px;top:209.5px" width="7" height="4" viewBox="0 0 7 4"><path d="M0 4H7L3.5 0Z" fill="#6a6a6a"/></svg>
<div class="a" style="left:1053px;top:219px;width:15px;height:162px;background:#fff;border:1px solid #c2c2c2"></div>
<div class="a" style="left:1053px;top:381px;width:15px;height:270px;background:#dadada;"></div>
<div class="a" style="left:1053px;top:651px;width:15px;height:15px;background:#fff;border:1px solid #c2c2c2"></div>
<svg style="left:1057px;top:656.5px" width="7" height="4" viewBox="0 0 7 4"><path d="M0 0H7L3.5 4Z" fill="#6a6a6a"/></svg>
<div class="a" style="left:0px;top:665px;width:1070px;height:28px;background:#e6e6e6;"></div>
<div class="a" style="left:0px;top:665px;width:1049px;height:1px;background:#b8b8b8;"></div>
<div class="a" style="left:98px;top:665px;width:107px;height:25px;background:#fff;border-left:1px solid #c8c8c8;border-right:1px solid #c8c8c8"></div>
<div class="a" style="left:98px;top:688px;width:107px;height:2px;background:#217346;"></div>
<div class="t" style="left:110.7px;top:669.2px;font-size:12.5px;letter-spacing:0.075px;font-weight:bold;-webkit-text-stroke:0;color:#1e7145;">microexcel.ru</div>
<svg style="left:25px;top:675px" width="5" height="7" viewBox="0 0 5 7"><path d="M5 0V7L0 3.5Z" fill="#c4c4c4"/></svg>
<svg style="left:54px;top:675px" width="5" height="7" viewBox="0 0 5 7"><path d="M0 0V7L5 3.5Z" fill="#c4c4c4"/></svg>
<svg style="left:238px;top:670.5px" width="16" height="16" viewBox="0 0 16 16"><circle cx="8" cy="8" r="7" fill="none" stroke="#6e6e6e" stroke-width="1.2"/><path d="M4.5 8H11.5M8 4.5V11.5" stroke="#6e6e6e" stroke-width="1.4"/></svg>
<div class="a" style="left:642px;top:675px;width:1.7px;height:1.7px;background:#a0a0a0;"></div>
<div class="a" style="left:642px;top:678.5px;width:1.7px;height:1.7px;background:#a0a0a0;"></div>
<div class="a" style="left:642px;top:682px;width:1.7px;height:1.7px;background:#a0a0a0;"></div>
<div class="a" style="left:659px;top:672px;width:15px;height:15px;background:#fff;border:1px solid #b4b4b4"></div>
<svg style="left:664px;top:676px" width="4" height="7" viewBox="0 0 4 7"><path d="M4 0V7L0 3.5Z" fill="#6a6a6a"/></svg>
<div class="a" style="left:674px;top:672px;width:320px;height:15px;background:#fff;border:1px solid #b4b4b4"></div>
<div class="a" style="left:994px;top:672px;width:43px;height:15px;background:#dcdcdc;"></div>
<div class="a" style="left:1037px;top:672px;width:15px;height:15px;background:#fff;border:1px solid #b4b4b4"></div>
<svg style="left:1043px;top:676px" width="4" height="7" viewBox="0 0 4 7"><path d="M0 0V7L4 3.5Z" fill="#6a6a6a"/></svg>
<div class="a" style="left:0px;top:693px;width:1070px;height:22px;background:#f3f3f3;"></div>
<div class="a" style="left:0px;top:693px;width:1070px;height:1px;background:#f9f9f9;"></div>
<div class="t" style="left:42.0px;top:693.6px;font-size:12px;letter-spacing:-0.479px;">Страница: 1 из 1</div>
<div class="a" style="left:36px;top:692px;width:99px;height:21.8px;background:transparent;border:2.2px solid #ee0e12;border-radius:11px"></div>
<div class="t" style="left:1023.0px;top:693.2px;font-size:10.5px;letter-spacing:-0.370px;">100 %</div>
<div class="a" style="left:809px;top:694px;width:38px;height:21px;background:#c8c8c8;"></div>
<div class="a" style="left:900px;top:703.5px;width:100px;height:1px;background:#8c8c8c;"></div>
<div class="a" style="left:948px;top:698px;width:5px;height:11px;background:#6a6a6a;"></div>
<div class="a" style="left:890px;top:702.8px;width:6px;height:1.9px;background:#4a4a4a;"></div>
<div class="a" style="left:1003.4px;top:703px;width:7px;height:1.7px;background:#4a4a4a;"></div>
<div class="a" style="left:1006.1px;top:699.9px;width:1.7px;height:7.8px;background:#4a4a4a;"></div>
<svg style="left:0;top:0" width="1070" height="715" viewBox="0 0 1070 715"><g fill="none" stroke="#fff" stroke-width="2"><rect x="21.2" y="10" width="11.8" height="11.5"/><path d="M20.2 16.7H34"/></g><path d="M23.3 18.6H31V22.5H23.3Z" fill="#fff"/><rect x="24.9" y="20" width="2.3" height="2.6" fill="#007245"/><g fill="none" stroke="#fff" stroke-width="2" stroke-linecap="round" stroke-linejoin="round"><path d="M50 13.6H57C61 13.6 63.2 16 62.6 18.4C62 20.6 60 21.6 57.6 21.6"/><path d="M53.6 9.6L49.6 13.6L53.6 17.6"/></g><path d="M68 14H73.2L70.6 17Z" fill="#fff"/><g fill="none" stroke="#1d9a6c" stroke-width="2" stroke-linecap="round" stroke-linejoin="round"><path d="M97 13.6H90C86 13.6 83.8 16 84.4 18.4C85 20.6 87 21.6 89.4 21.6"/><path d="M93.4 9.6L97.4 13.6L93.4 17.6"/></g><path d="M103.6 14H108.4L106 16.8Z" fill="#1d9a6c"/><rect x="122.4" y="12.9" width="6" height="1.2" fill="#fff"/><path d="M122.4 15.4H128.4L125.4 19Z" fill="#fff"/><g fill="none" stroke="#fff" stroke-width="1.1"><rect x="903.5" y="9.5" width="12.5" height="9.5"/><path d="M903.5 11.3H916"/><path d="M909.8 17.5V13M907.6 15L909.8 12.9L912 15"/></g><path d="M951 14.6H961.4" stroke="#fff" stroke-width="1.1"/><rect x="997.5" y="9.5" width="9.5" height="9.5" fill="none" stroke="#fff" stroke-width="1.1"/><path d="M1043 9.3L1053 19.2M1053 9.3L1043 19.2" stroke="#fff" stroke-width="1.1"/><g fill="none" stroke="#fff" stroke-width="1.1"><path d="M740.3 51.2C740.3 49 737.2 48.2 737.2 45.3A5.2 5.2 0 0 1 747.6 45.3C747.6 48.2 744.5 49 744.5 51.2Z"/><path d="M740.3 53.2H744.5M740.8 55.2H744"/></g><g fill="none" stroke="#fff" stroke-width="1.1"><circle cx="954.3" cy="45" r="4.2"/><path d="M947.5 55.8C947.8 52 950.5 49.6 954.3 49.6"/><path d="M958 49.5V56.5M954.6 53H961.6" stroke-width="1.2"/></g><rect x="11.5" y="69.5" width="31" height="31" fill="#fdfdfd" stroke="#6d84a8" stroke-width="1"/><path d="M13.5 71.5H32.5L40.5 79.5V98.5H13.5Z" fill="#fff" stroke="#6d84a8" stroke-width="1"/><path d="M33 71H41V79Z" fill="#44546a"/><path d="M32.5 71.5V79.5H40.5" fill="none" stroke="#8497b0" stroke-width="0.8"/><text x="16.6" y="89.5" font-family="Liberation Sans, sans-serif" font-size="17.5" fill="#3f5478" textLength="20.5" lengthAdjust="spacingAndGlyphs">Aa</text><rect x="15.0" y="92.2" width="2.8" height="2.8" fill="#1e72c8"/><rect x="18.9" y="92.2" width="2.8" height="2.8" fill="#f47920"/><rect x="22.8" y="92.2" width="2.8" height="2.8" fill="#a5a5a5"/><rect x="26.7" y="92.2" width="2.8" height="2.8" fill="#ffc000"/><rect x="30.6" y="92.2" width="2.8" height="2.8" fill="#2e9bd6"/><rect x="34.5" y="92.2" width="2.8" height="2.8" fill="#4ea72e"/><rect x="51" y="69" width="16" height="16" fill="#b8b8b8"/><rect x="51.7" y="69.7" width="7.3" height="7.3" fill="#44546a"/><rect x="59" y="69.7" width="7.3" height="7.3" fill="#e7e6e6"/><rect x="51.7" y="77" width="7.3" height="7.3" fill="#1e72c8"/><rect x="59" y="77" width="7.3" height="7.3" fill="#f47920"/><rect x="51.5" y="92.5" width="15" height="15" fill="#fff" stroke="#6d84a8"/><text x="54.6" y="105" font-family="Liberation Sans, sans-serif" font-size="12.5" fill="#24356b">A</text><rect x="51.5" y="115.5" width="15" height="15" fill="#fff" stroke="#6d84a8"/><circle cx="59" cy="123" r="5.8" fill="#8faadc" stroke="#4a78c8" stroke-width="1"/><rect x="161.5" y="71.5" width="22" height="27" fill="#fff" stroke="#808080"/><path d="M166.5 72V98M178.5 72V98M162 76.5H183M162 93.5H183" stroke="#1e82c8" stroke-width="1" fill="none"/><path d="M215.5 70.5H227.5L232.5 75.5V93.5H215.5Z" fill="#fff" stroke="#808080"/><path d="M227.5 70.5V75.5H232.5" fill="none" stroke="#808080"/><path d="M220.5 82.5H238.5L243.5 87.5V99.5H220.5Z" fill="#fff" stroke="#808080"/><path d="M238.5 82.5V87.5H243.5" fill="none" stroke="#808080"/><path d="M234.5 71.2C238.5 71 241 73.5 240.8 78" fill="none" stroke="#1e82c8" stroke-width="1.9"/><path d="M237 75.6L240.7 79.6L244.4 75.6" fill="none" stroke="#1e82c8" stroke-width="1.9"/><path d="M281.5 75.5H294.5L299.5 80.5V97.5H281.5Z" fill="#fff" stroke="#808080"/><path d="M294.5 75.5V80.5H299.5" fill="none" stroke="#808080"/><path d="M277.5 75V98M276 75.5H279M276 97.5H279M281 71.5H300M281.5 70V73M299.5 70V73" stroke="#1e82c8" fill="none"/><path d="M322.5 71.5H337.5L342.5 76.5V98.5H322.5Z" fill="#fff" stroke="#808080"/><path d="M337.5 71.5V76.5H342.5" fill="none" stroke="#808080"/><path d="M333 74.7H325.7V95.3H331" fill="none" stroke="#1e82c8" stroke-width="1.4"/><path d="M333 87H350A2 2 0 0 1 352 89V97H331V89A2 2 0 0 1 333 87Z" fill="#7d7d7d"/><rect x="336" y="82.2" width="11.5" height="7.8" fill="#fff" stroke="#808080"/><rect x="335.5" y="88.6" width="12.5" height="1.5" fill="#1e82c8"/><rect x="348.6" y="91.6" width="1.6" height="1.6" fill="#fff"/><rect x="336.5" y="95" width="10.5" height="5.7" fill="#fff" stroke="#808080"/><path d="M338.5 97H345M338.5 99H345" stroke="#808080" stroke-width="0.8"/><path d="M378.5 71V82.5H398.5V71" fill="#fff" stroke="#808080"/><path d="M378.5 99V87.5H398.5V99" fill="#fff" stroke="#808080"/><path d="M374 80.8L378.3 84.5L374 88.1Z" fill="#1e82c8"/><rect x="433.5" y="72.5" width="26" height="25" rx="1.5" fill="#fff" stroke="#808080"/><path d="M440.5 73V97M447 73V97M453.5 73V97M434 78.5H459M434 84.5H459M434 90.5H459M434 94.5H459" stroke="#b4b4b4" fill="none"/><path d="M435.3 92.7L442.5 80.8L454.5 92.7Z" fill="#1e82c8"/><path d="M447.8 83.8L450.2 81.8L458 89.2V92.7H456.2Z" fill="#1e82c8"/><circle cx="453" cy="77" r="3" fill="#f2bd72"/><rect x="494.5" y="72.5" width="27.5" height="24" fill="#fff" stroke="#b0b0b0"/><path d="M503.5 77V96M512.8 77V96M495 81.5H522M495 86.5H522M495 91.5H522" stroke="#b0b0b0" fill="none"/><path d="M494.5 72.5H522V76.6H494.5ZM503.5 72.5V76.6M512.8 72.5V76.6" stroke="#f0592a" fill="#fff"/><path d="M505.2 87H522.2A2 2 0 0 1 524.2 89V97H503.2V89A2 2 0 0 1 505.2 87Z" fill="#7d7d7d"/><rect x="508.2" y="82.2" width="11.5" height="7.8" fill="#fff" stroke="#808080"/><rect x="507.7" y="88.6" width="12.5" height="1.5" fill="#1e82c8"/><rect x="520.8" y="91.6" width="1.6" height="1.6" fill="#fff"/><rect x="508.7" y="95" width="10.5" height="5.7" fill="#fff" stroke="#808080"/><path d="M510.7 97H517.2M510.7 99H517.2" stroke="#1e82c8" stroke-width="0.8"/><rect x="558.5" y="69.5" width="15" height="3.7" fill="#fff" stroke="#808080"/><path d="M558.5 74.5V81M573.5 74.5V81" stroke="#8a8a8a" stroke-dasharray="1 1" fill="none"/><path d="M559 82H563.5M568.5 82H573" stroke="#1e82c8" stroke-width="1.5"/><path d="M561 79.6L558.6 82L561 84.4M571 79.6L573.4 82L571 84.4" fill="none" stroke="#1e82c8" stroke-width="1.5"/><rect x="564.7" y="80.7" width="2.6" height="2.6" fill="#fff" stroke="#777" stroke-width="0.9"/><rect x="569.7" y="92.5" width="3.8" height="15" fill="#fff" stroke="#808080"/><path d="M562 92.5H569M562 107.5H569" stroke="#8a8a8a" stroke-dasharray="1 1" fill="none"/><path d="M561 93V97M561 103V107" stroke="#1e82c8" stroke-width="1.5"/><path d="M558.6 95L561 92.6L563.4 95M558.6 105L561 107.4L563.4 105" fill="none" stroke="#1e82c8" stroke-width="1.5"/><rect x="559.7" y="98.7" width="2.6" height="2.6" fill="#fff" stroke="#777" stroke-width="0.9"/><path d="M567 116.5H572.5V129.5H559.5V124.5" fill="none" stroke="#808080"/><rect x="558.5" y="115.5" width="8" height="8" fill="#fff" stroke="#666" stroke-dasharray="1 1"/><path d="M570.3 127.3L566.6 123.6M566.4 126.5V123.4H569.5" fill="none" stroke="#1e82c8" stroke-width="1.3"/><rect x="944" y="77" width="9" height="9" fill="#f8c473"/><path d="M946.5 74.5H941.5V79.5M950.5 88.5H955.5V83.5" fill="none" stroke="#555" stroke-width="1"/><path d="M535.5 150V144.5H541" fill="none" stroke="#8a8a8a"/><path d="M538 147L541.5 150.5M541.8 147.5V150.8H538.5" fill="none" stroke="#777" stroke-width="1"/><path d="M708.5 150V144.5H714" fill="none" stroke="#8a8a8a"/><path d="M711 147L714.5 150.5M714.8 147.5V150.8H711.5" fill="none" stroke="#777" stroke-width="1"/><path d="M889.5 150V144.5H895" fill="none" stroke="#8a8a8a"/><path d="M892 147L895.5 150.5M895.8 147.5V150.8H892.5" fill="none" stroke="#777" stroke-width="1"/><path d="M1052.2 149.5L1056.6 145.2L1061 149.5" fill="none" stroke="#666" stroke-width="1.6"/><path d="M149 174.8L159.6 184M159.6 174.8L149 184" stroke="#bdbdbd" stroke-width="1.6"/><path d="M183.8 180L187.8 184L196 175.3" fill="none" stroke="#bdbdbd" stroke-width="1.8"/><text x="221.5" y="183.5" font-family="Liberation Serif, serif" font-style="italic" font-weight="bold" font-size="14" fill="#5a5a5a">f</text><text x="226.2" y="184" font-family="Liberation Serif, serif" font-style="italic" font-weight="bold" font-size="9.5" fill="#5a5a5a">x</text><path d="M1054 176.5L1057.3 180L1060.6 176.5" fill="none" stroke="#555" stroke-width="1.6"/><rect x="7.6" y="698.6" width="11" height="10.6" fill="#fff" stroke="#5e5e5e" stroke-width="1"/><rect x="7.2" y="698.1" width="11.8" height="2.2" fill="#5e5e5e"/><rect x="9.6" y="702.0" width="1.8" height="1.3" fill="#666"/><rect x="12.5" y="702.0" width="1.8" height="1.3" fill="#666"/><rect x="15.4" y="702.0" width="1.8" height="1.3" fill="#666"/><rect x="9.6" y="704.4" width="1.8" height="1.3" fill="#666"/><rect x="12.5" y="704.4" width="1.8" height="1.3" fill="#666"/><rect x="15.4" y="704.4" width="1.8" height="1.3" fill="#666"/><rect x="9.6" y="706.8" width="1.8" height="1.3" fill="#666"/><rect x="12.5" y="706.8" width="1.8" height="1.3" fill="#666"/><rect x="15.4" y="706.8" width="1.8" height="1.3" fill="#666"/><circle cx="9.3" cy="700.2" r="3.3" fill="#f3f3f3"/><circle cx="9.2" cy="700.2" r="2.7" fill="#5a5a5a"/><g fill="#fff" stroke="#6a6a6a" stroke-width="1.3"><rect x="783.4" y="697.8" width="12" height="11.6"/><path d="M787.4 697.8V709.4M791.4 697.8V709.4M783.4 701.7H795.4M783.4 705.5H795.4" fill="none"/></g><g fill="none" stroke="#6a6a6a" stroke-width="1.2"><rect x="821.6" y="697.8" width="12.8" height="11.6"/><rect x="824.8" y="700" width="6.6" height="7.4"/><path d="M826.4 702H829.8M826.4 703.8H829.8M826.4 705.6H829.8" stroke-width="0.9"/></g><g fill="none" stroke="#6a6a6a" stroke-width="1.2"><rect x="859.6" y="697.8" width="12.8" height="11.6"/><path d="M864 697.8V704.2M868 697.8V704.2H859.6"/></g></svg>
</body></html>
